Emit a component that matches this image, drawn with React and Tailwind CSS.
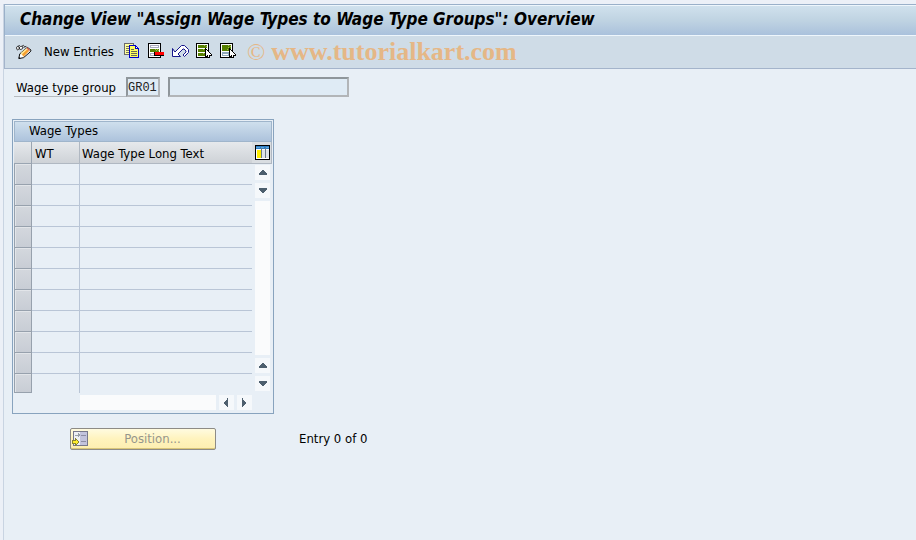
import { useState } from "react";

const rows = Array.from({ length: 11 }, (_, i) => i);

function ChangeIcon() {
  return (
    <svg width="17" height="16" viewBox="0 0 17 16">
      <path
        d="M1 5c-1-2 0-3 1-3s2 2 1 3-2 1-2 0M4 5c-1-2 0-3 2-3s1 3 0 3-2 1-2 0M2 2l2-1M6 2l2-1 1 1M8 3l3-1"
        fill="#fff"
        stroke="#222"
      />
      <path d="M12 3l4 3-1 2-7 6-5 1 1-5 7-6z" fill="#fff" stroke="#000" />
      <path d="M6 10l6-5 2 2-6 6z" fill="#f7a030" />
      <path d="M5 9l6-5 1 1-6 6z" fill="#ffe48c" />
      <path d="M12 3l3 3-1 1-3-3z" fill="#d9644c" />
      <path d="M3 15v-2l2 2z" fill="#000" />
    </svg>
  );
}

function CopyIcon() {
  return (
    <svg width="16" height="16" viewBox="0 0 16 16" shapeRendering="crispEdges">
      <path d="M0 0h10v12H0z" fill="#6b6b6b" />
      <path d="M1 1h8v10H1z" fill="#ffff9c" />
      <path d="M2 3h3v1H2zM2 5h3v1H2zM2 7h3v1H2zM2 9h3v1H2z" fill="#77775a" />
      <path d="M5 2h7v1h1v1h1v1h1v10H5z" fill="#0000c8" />
      <path d="M6 3h5v3h3v8H6z" fill="#ffff5c" />
      <path d="M12 4h1v1h-1z" fill="#fff" />
      <path d="M7 6h3v1H7zM7 8h6v1H7zM7 10h6v1H7zM7 12h6v1H7z" fill="#6a6a55" />
    </svg>
  );
}

function DeleteIcon() {
  return (
    <svg width="16" height="16" viewBox="0 0 16 16" shapeRendering="crispEdges">
      <path d="M0 0h13v15H0z" fill="#000" />
      <path d="M1 1h11v13H1z" fill="#fff" />
      <path d="M2 2h9v3H2z" fill="#a9a9bd" />
      <path d="M3 3h7v1H3z" fill="#fff" />
      <path d="M2 6h9v3H2z" fill="#568000" />
      <path d="M7 6h1v1H7zM9 6h1v1H9zM8 7h1v1H8zM10 7h1v1h-1z" fill="#9dbb50" />
      <path d="M2 10h9v3H2z" fill="#a9a9bd" />
      <path d="M3 11h7v1H3z" fill="#fff" />
      <path d="M6 9h10v4H6z" fill="#000" />
      <path d="M7 9h9v3H7z" fill="#f00" />
    </svg>
  );
}

function UndoIcon() {
  return (
    <svg width="17" height="16" viewBox="0 0 17 16" className="shrink-0">
      <path
        d="M.5 5.500v8h8l-2.500-2.500 5-5h1l2 2v1l-3 3 1.500 1.500 4-4v-3l-4-4h-3l-6.500 6.500z"
        fill="#fff"
        stroke="#17178c"
      />
    </svg>
  );
}

function SelectAllIcon() {
  return (
    <svg width="16" height="16" viewBox="0 0 16 16" shapeRendering="crispEdges">
      <path d="M0 0h13v15H0z" fill="#000" />
      <path d="M1 1h11v13H1z" fill="#fff" />
      <path d="M2 2h9v3H2zM2 6h9v3H2zM2 10h9v3H2z" fill="#568000" />
      <path d="M8 2h1v1H8zM10 3h1v1h-1zM7 6h1v1H7zM7 10h1v1H7z" fill="#9dbb50" />
      <path d="M9 5h1v1h1v1h1v1h1v1h1v1h1v1h1v2h-2v2h-3v-1h-2z" fill="#000" />
      <path d="M10 7h1v1h1v1h1v1h1v1h1v1h-2v2h-1v-2h-1v1h-1z" fill="#fff" />
    </svg>
  );
}

function SelectBlockIcon() {
  return (
    <svg width="16" height="16" viewBox="0 0 16 16" shapeRendering="crispEdges">
      <path d="M0 0h13v15H0z" fill="#000" />
      <path d="M1 1h11v13H1z" fill="#fff" />
      <path d="M2 2h9v6H2z" fill="#568000" />
      <path d="M8 2h1v1H8zM10 3h1v1h-1zM8 4h1v1H8zM7 6h1v1H7z" fill="#9dbb50" />
      <path d="M2 9h8v4H2z" fill="#8fa9bd" />
      <path d="M3 11h5v1H3z" fill="#fff" />
      <path d="M9 5h1v1h1v1h1v1h1v1h1v1h1v1h1v2h-2v2h-3v-1h-2z" fill="#000" />
      <path d="M10 7h1v1h1v1h1v1h1v1h1v1h-2v2h-1v-2h-1v1h-1z" fill="#fff" />
    </svg>
  );
}

function ColumnsIcon() {
  return (
    <svg width="15" height="15" viewBox="0 0 15 15" shapeRendering="crispEdges">
      <path d="M0 0h15v15H0z" fill="#000" />
      <path d="M1 1h13v13H1z" fill="#fff" />
      <path d="M1 1h13v3H1z" fill="#2f7fc4" />
      <path d="M1 2h4v1H1zM6 2h3v1H6zM11 2h3v1h-3z" fill="#62a6dc" />
      <path d="M2 5h4v8H2z" fill="#ffee00" />
      <path d="M7 5h3v8H7zM11 5h3v8h-3z" fill="#dfe3e6" />
      <path d="M6 3h1v10H6zM10 3h1v10h-1z" fill="#6d7a84" />
    </svg>
  );
}

function PositionIcon() {
  return (
    <svg width="16" height="16" viewBox="0 0 16 16" shapeRendering="crispEdges">
      <path d="M1 0h15v15H1z" fill="#77778a" />
      <path d="M2 1h6v13H2z" fill="#eef0f4" />
      <path d="M8 1h7v13H8z" fill="#c3c3dc" />
      <path d="M9 4h5v1H9zM9 10h5v1H9z" fill="#8d8da4" />
      <path d="M3 4h3V2h1v1h1v2H7v1H6V5H3z" fill="#9aa0a8" />
      <path d="M0 9h3V7h1v1h1v1h1v1h1v2H6v1H5v1H4v1H3v-2H0z" fill="#8a8530" />
      <path d="M1 10h3V9h1v1h1v2H5v1H4v-1H1z" fill="#ffee2b" />
    </svg>
  );
}

const arrows = {
  up: "M7 5h2v1h1v1h1v1h1v2H4v-2h1v-1h1v-1h1z",
  down: "M4 5h8v2h-1v1h-1v1h-1v1H7v-1H6v-1H5v-1H4z",
  left: "M9 3v9H8v-1H7v-1H6v-1H5V7h1V6h1V5h1V3z",
  right: "M5 3v9h1v-1h1v-1h1v-1h1V7H8V6H7V5H6V3z",
};

function ScrollButton({ dir }) {
  return (
    <button
      type="button"
      aria-label={"Scroll " + dir}
      className="h-[15px] w-[15px] shrink-0 bg-[#f5f8fb]"
    >
      <svg width="15" height="15" viewBox="0 0 15 15" shapeRendering="crispEdges">
        <path d={arrows[dir]} fill="#4d5f6e" />
      </svg>
    </button>
  );
}

function ToolButton({ label, children }) {
  return (
    <button type="button" aria-label={label} className="flex w-4 shrink-0 justify-start">
      {children}
    </button>
  );
}

export default function App() {
  const [group, setGroup] = useState("GR01");
  const [groupText, setGroupText] = useState("");

  return (
    <div className="min-h-screen bg-[#ecf0f7] pt-1 pl-[3px] font-['Tahoma','DejaVu_Sans_Condensed','DejaVu_Sans',sans-serif] text-[13px] leading-4 text-black">
      <div className="flex min-h-[calc(100vh-4px)] flex-col border-l border-[#c9d4e2] bg-[#e8eff6]">
        {/* Title bar */}
        <header className="border-t border-l border-[#9ab0c9]">
          <h1 className="flex h-[31px] items-center border-y border-[#eef6fc] bg-linear-to-b from-[#d0e1ed] via-[#bfd3e2] to-[#aac1dc] pb-1 pl-[15px] text-[17px] leading-5 font-bold whitespace-nowrap italic">
            Change View "Assign Wage Types to Wage Type Groups": Overview
          </h1>
        </header>

        {/* Toolbar */}
        <div className="flex h-[33px] items-center border-b border-l border-[#a4b4cb] bg-[#cfdce7] pl-[11px]">
          <ToolButton label="Display / Change">
            <ChangeIcon />
          </ToolButton>
          <button type="button" className="ml-3 w-[80px] text-left whitespace-nowrap">
            New Entries
          </button>
          <div className="flex gap-2 pb-0.5">
            <ToolButton label="Copy As">
              <CopyIcon />
            </ToolButton>
            <ToolButton label="Delete">
              <DeleteIcon />
            </ToolButton>
            <ToolButton label="Undo">
              <UndoIcon />
            </ToolButton>
            <ToolButton label="Select All">
              <SelectAllIcon />
            </ToolButton>
            <ToolButton label="Select Block">
              <SelectBlockIcon />
            </ToolButton>
          </div>
          <div className="ml-[11px] flex gap-1.5 font-['Liberation_Serif',serif] text-[26px] leading-6 font-bold whitespace-nowrap text-[#e5b786]">
            <span className="font-normal text-[24px]">©</span>
            <span>www.tutorialkart.com</span>
          </div>
        </div>

        <main className="px-2 pt-2">
          <div className="flex h-5 items-stretch pl-0.5">
            <label
              htmlFor="group"
              className="w-28 border-b border-[#b5babf] pt-[3px] pl-0.5 whitespace-nowrap"
            >
              Wage type group
            </label>
            <input
              id="group"
              value={group}
              onChange={(e) => setGroup(e.target.value)}
              className="w-[34px] border-2 border-t-[#8f969b] border-r-[#b2b5b8] border-b-[#b2b5b8] border-l-[#8f969b] bg-[#dfebf5] pt-0.5 font-['Liberation_Mono',monospace] text-[12px] text-[#222] outline-none"
            />
            <input
              aria-label="Wage type group text"
              value={groupText}
              onChange={(e) => setGroupText(e.target.value)}
              className="ml-2 w-[181px] border-2 border-t-[#8f969b] border-r-[#b2b5b8] border-b-[#b2b5b8] border-l-[#8f969b] bg-[#dfebf5] outline-none"
            />
          </div>

          {/* Wage types table */}
          <section className="mt-[22px] w-[262px] border border-[#88a3be] p-px pb-[3px]">
            <h2 className="h-[21px] border border-[#9fb5cb] bg-linear-to-b from-[#cfdfed] to-[#adc3dc] pt-px pl-[14px]">
              Wage Types
            </h2>
            <div className="flex">
              <table className="w-[238px] table-fixed border-separate border-spacing-0">
                <thead>
                  <tr className="h-[22px] bg-linear-to-b from-[#e6e9ec] to-[#cdd1d6] text-left">
                    <th className="w-[18px] border-r border-b border-[#9aa5b2] p-0">
                      <button type="button" aria-label="Select all rows" className="block h-4 w-full" />
                    </th>
                    <th className="w-[48px] border-r border-b border-[#b0b8c2] p-0 pt-0.5 pl-[3px] font-normal">
                      WT
                    </th>
                    <th className="border-b border-[#b0b8c2] p-0 pt-0.5 pl-0.5 font-normal whitespace-nowrap">
                      Wage Type Long Text
                    </th>
                  </tr>
                </thead>
                <tbody>
                  {rows.map((row) => (
                    <tr key={row} className="group h-[21px] last:h-[19px]">
                      <td className="border-x border-b border-[#97a1ad] p-0">
                        <button
                          type="button"
                          aria-label={"Select row " + (row + 1)}
                          className="block h-5 w-full border-t border-l border-[#e2e5e9] bg-linear-to-b from-[#d3d7dd] to-[#c8cdd5] group-last:h-[18px]"
                        />
                      </td>
                      <td className="border-r border-b border-[#b9c5d6] p-0 group-last:border-b-0" />
                      <td className="border-b border-[#b9c5d6] p-0 group-last:border-b-0" />
                    </tr>
                  ))}
                </tbody>
              </table>
              <div className="flex flex-1 flex-col">
                <button
                  type="button"
                  aria-label="Table settings"
                  className="flex h-[22px] w-full items-center justify-end border-r border-b border-[#b0b8c2] bg-[#d9dde1] pr-px"
                >
                  <ColumnsIcon />
                </button>
                <div className="flex flex-1 flex-col items-end gap-[3px] pt-px pr-0.5 pb-0.5">
                  <ScrollButton dir="up" />
                  <ScrollButton dir="down" />
                  <div className="w-[15px] flex-1 bg-[#fafbfc]" />
                  <ScrollButton dir="up" />
                  <ScrollButton dir="down" />
                </div>
              </div>
            </div>
            <div className="mt-0.5 flex gap-[3px] pr-5 pl-[66px]">
              <div className="h-[15px] flex-1 bg-[#fafbfc]" />
              <ScrollButton dir="left" />
              <ScrollButton dir="right" />
            </div>
          </section>

          <div className="mt-[14px] flex items-center pl-[58px]">
            <button
              type="button"
              className="flex h-[22px] w-[146px] items-center rounded-xs border border-[#8d8b86] bg-linear-to-b from-[#fffbe0] via-[#fff3bd] to-[#fdeeb0] pl-px text-[#96968c] shadow-[inset_0_-1px_0_#d9c67a]"
            >
              <PositionIcon />
              <span className="flex-1 pl-0.5 text-center">Position...</span>
            </button>
            <span className="ml-[83px] whitespace-nowrap">Entry 0 of 0</span>
          </div>
        </main>
      </div>
    </div>
  );
}
